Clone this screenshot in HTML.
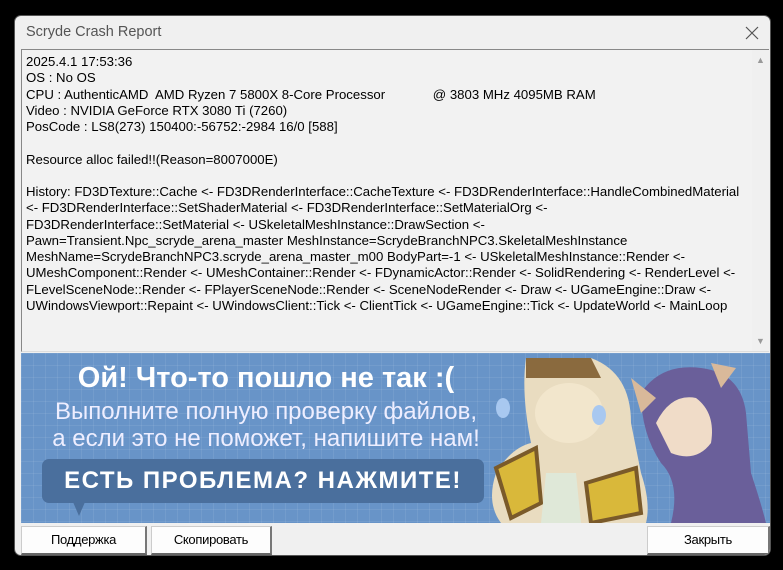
<!DOCTYPE html>
<html><head><meta charset="utf-8"><style>
*{margin:0;padding:0;box-sizing:border-box}
body{width:783px;height:570px;background:#000;position:relative;overflow:hidden;font-family:"Liberation Sans",sans-serif}
.win{position:absolute;left:14px;top:15px;width:757px;height:541px;background:#f0f0f0;border-radius:7px;border:1px solid #555;overflow:hidden}
.title{position:absolute;left:11px;top:8px;font-size:14.5px;color:#555}
.x{position:absolute;right:11px;top:10px}
.log{position:absolute;left:6px;top:33px;width:748px;height:303px;background:#f2f2f2;border:1px solid #888;border-right:none;border-bottom-color:#ddd}
.txt{position:absolute;left:4px;top:4px;font-size:13.2px;line-height:16.27px;letter-spacing:0;color:#000;white-space:pre}
.sb{position:absolute;right:0;top:0;width:17px;height:100%;background:#f0f0f0}
.sb span{position:absolute;left:4px;font-size:9px;color:#999}
.ban{position:absolute;left:6px;top:337px;width:749px;height:170px;background-color:#6894c8;background-image:linear-gradient(rgba(255,255,255,.07) 1px,transparent 1px),linear-gradient(90deg,rgba(255,255,255,.07) 1px,transparent 1px);background-size:12px 12px;overflow:hidden}
.h1{position:absolute;left:0;width:490px;text-align:center;top:9px;color:#fff;font-weight:bold;font-size:29px}
.h2{position:absolute;left:0;width:490px;text-align:center;color:#eef;font-size:24px;line-height:27px;top:45px}
.btnb{position:absolute;left:21px;top:106px;width:442px;height:44px;background:#4a6f9d;border-radius:7px;color:#fff;font-weight:bold;font-size:24px;letter-spacing:1.5px;text-align:center;line-height:44px}
.tail{position:absolute;left:52px;top:149px;width:0;height:0;border-left:6px solid transparent;border-right:6px solid transparent;border-top:14px solid #4a6f9d}
.b{position:absolute;top:510px;height:29px;background:#fdfdfd;border:1px solid #ccc;border-bottom:2px solid #666;border-right:2px solid #777;font-size:13px;text-align:center;line-height:26px;letter-spacing:-0.3px}
</style></head><body>
<div class="win">
<div class="title">Scryde Crash Report</div>
<svg class="x" width="14" height="14"><path d="M1 1L13 13M13 1L1 13" stroke="#555" stroke-width="1.2"/></svg>
<div class="log">
<div class="txt">2025.4.1 17:53:36
OS : No OS
CPU : AuthenticAMD  AMD Ryzen 7 5800X 8-Core Processor             @ 3803 MHz 4095MB RAM
Video : NVIDIA GeForce RTX 3080 Ti (7260)
PosCode : LS8(273) 150400:-56752:-2984 16/0 [588]

Resource alloc failed!!(Reason=8007000E)

History: FD3DTexture::Cache &lt;- FD3DRenderInterface::CacheTexture &lt;- FD3DRenderInterface::HandleCombinedMaterial
&lt;- FD3DRenderInterface::SetShaderMaterial &lt;- FD3DRenderInterface::SetMaterialOrg &lt;-
FD3DRenderInterface::SetMaterial &lt;- USkeletalMeshInstance::DrawSection &lt;-
Pawn=Transient.Npc_scryde_arena_master MeshInstance=ScrydeBranchNPC3.SkeletalMeshInstance
MeshName=ScrydeBranchNPC3.scryde_arena_master_m00 BodyPart=-1 &lt;- USkeletalMeshInstance::Render &lt;-
UMeshComponent::Render &lt;- UMeshContainer::Render &lt;- FDynamicActor::Render &lt;- SolidRendering &lt;- RenderLevel &lt;-
FLevelSceneNode::Render &lt;- FPlayerSceneNode::Render &lt;- SceneNodeRender &lt;- Draw &lt;- UGameEngine::Draw &lt;-
UWindowsViewport::Repaint &lt;- UWindowsClient::Tick &lt;- ClientTick &lt;- UGameEngine::Tick &lt;- UpdateWorld &lt;- MainLoop</div>
<div class="sb"><span style="top:5px">▲</span><span style="bottom:5px">▼</span></div>
</div>
<div class="ban">
<div class="h1">Ой! Что-то пошло не так :(</div>
<div class="h2">Выполните полную проверку файлов,<br>а если это не поможет, напишите нам!</div>
<div class="btnb">ЕСТЬ ПРОБЛЕМА? НАЖМИТЕ!</div>
<div class="tail"></div>
<svg style="position:absolute;left:460px;top:0" width="290" height="170">
<path d="M160 40 Q180 10 220 15 Q260 20 265 60 L270 120 Q280 150 285 170 L190 170 Q200 130 180 110 Q160 80 160 40Z" fill="#6a5f9a"/>
<path d="M175 70 Q190 40 215 45 Q235 60 230 90 Q215 110 190 100 Z" fill="#f0dcc8"/>
<path d="M150 25 L175 45 L160 60Z M230 10 L255 15 L240 35Z" fill="#d9b99a"/>
<path d="M45 5 L110 5 Q150 20 150 70 L160 120 Q170 150 165 170 L20 170 Q5 150 15 120 Q30 95 50 90 Q40 40 45 5Z" fill="#e9dcc0"/>
<path d="M45 5 L110 5 L120 25 L45 25Z" fill="#8a6a3e"/>
<path d="M15 115 L55 95 L60 150 L30 165 Z M105 130 L155 115 L160 160 L110 170Z" fill="#d9b83a"/>
<path d="M15 115 L55 95 L60 150 L30 165 Z M105 130 L155 115 L160 160 L110 170Z" fill="none" stroke="#7a5a2a" stroke-width="4"/>
<path d="M65 120 L95 120 L100 170 L60 170Z" fill="#dfe8d8"/>
<ellipse cx="88" cy="60" rx="34" ry="30" fill="#f2e6cc"/>
<ellipse cx="22" cy="55" rx="7" ry="10" fill="#a8c8f0"/>
<ellipse cx="118" cy="62" rx="7" ry="10" fill="#a8c8f0"/>
</svg>
</div>
<div class="b" style="left:6px;width:126px">Поддержка</div>
<div class="b" style="left:136px;width:121px">Скопировать</div>
<div class="b" style="left:632px;width:123px">Закрыть</div>
</div>
</body></html>
